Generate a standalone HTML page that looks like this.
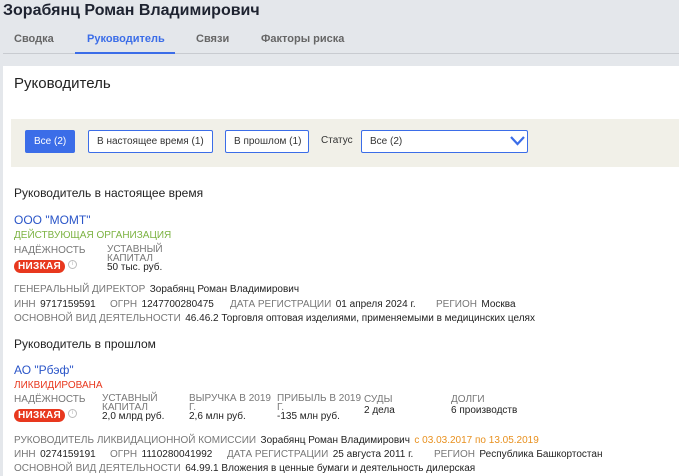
<!DOCTYPE html><html><head><meta charset="utf-8"><style>
*{margin:0;padding:0;box-sizing:border-box}
body{width:679px;height:476px;overflow:hidden;background:#e4e7eb;font-family:"Liberation Sans",sans-serif;position:relative;color:#222}
.a{position:absolute;white-space:nowrap}
.l{color:#777;font-size:10px}
.v{color:#222;font-size:10px}
.badge{background:#e8381e;color:#fff;font-weight:bold;font-size:10px;border-radius:7px;padding:1px 4px;letter-spacing:.3px}
.i{display:inline-block;width:9px;height:9px;border:1px solid #bbb;border-radius:50%;font-size:6px;color:#bbb;text-align:center;line-height:7px;vertical-align:middle;margin-left:3px}
.btn{position:absolute;top:130px;height:23px;border:1px solid #3b6de8;border-radius:2px;background:#fff;font-size:10px;line-height:21px;padding-left:8px;color:#333}
.t{position:absolute;top:33px;font-size:11px;font-weight:bold;color:#666;white-space:nowrap}
</style></head><body>
<div class="a" style="left:3px;top:2px;font-size:16px;font-weight:bold;color:#1e2330">Зорабянц Роман Владимирович</div>
<div class="t" style="left:14px">Сводка</div>
<div class="t" style="left:87px;color:#3b6de8">Руководитель</div>
<div class="t" style="left:196px">Связи</div>
<div class="t" style="left:261px">Факторы риска</div>
<div class="a" style="left:3px;top:53px;width:676px;height:1px;background:#c8cbd0"></div>
<div class="a" style="left:75px;top:52px;width:100px;height:2px;background:#3b6de8"></div>
<div class="a" style="left:3px;top:66px;width:676px;height:410px;background:#fff"></div>
<div class="a" style="left:14px;top:75px;font-size:15px;color:#222">Руководитель</div>
<div class="a" style="left:11px;top:119px;width:668px;height:48px;background:#f1f0e8"></div>
<div class="btn" style="left:25px;width:50px;background:#3b6de8;color:#fff">Все (2)</div>
<div class="btn" style="left:88px;width:125px">В настоящее время (1)</div>
<div class="btn" style="left:225px;width:84px">В прошлом (1)</div>
<div class="a" style="left:321px;top:135px;font-size:10px;color:#333">Статус</div>
<div class="btn" style="left:361px;width:167px">Все (2)</div>
<svg class="a" style="left:510px;top:136px" width="15" height="10"><path d="M1 1L7.5 8L14 1" stroke="#3b6de8" stroke-width="2.2" fill="none"/></svg>
<div class="a" style="left:14px;top:186px;font-size:12px;color:#222">Руководитель в настоящее время</div>
<div class="a" style="left:14px;top:213px;font-size:12px;color:#2a55c8">ООО "МОМТ"</div>
<div class="a" style="left:14px;top:230px;font-size:10px;color:#7cb342">ДЕЙСТВУЮЩАЯ ОРГАНИЗАЦИЯ</div>
<div class="a l" style="left:14px;top:245px">НАДЁЖНОСТЬ</div>
<div class="a l" style="left:107px;top:245px;line-height:9px">УСТАВНЫЙ<br>КАПИТАЛ</div>
<div class="a" style="left:14px;top:256px"><span class="badge">НИЗКАЯ</span><span class="i">i</span></div>
<div class="a v" style="left:107px;top:262px">50 тыс. руб.</div>
<div class="a" style="left:14px;top:279px"><span class="l">ГЕНЕРАЛЬНЫЙ ДИРЕКТОР</span> <span class="v">Зорабянц Роман Владимирович</span></div>
<div class="a" style="left:14px;top:294px"><span class="l">ИНН</span> <span class="v">9717159591</span></div>
<div class="a" style="left:110px;top:294px"><span class="l">ОГРН</span> <span class="v">1247700280475</span></div>
<div class="a" style="left:230px;top:294px"><span class="l">ДАТА РЕГИСТРАЦИИ</span> <span class="v">01 апреля 2024 г.</span></div>
<div class="a" style="left:436px;top:294px"><span class="l">РЕГИОН</span> <span class="v">Москва</span></div>
<div class="a" style="left:14px;top:308px"><span class="l">ОСНОВНОЙ ВИД ДЕЯТЕЛЬНОСТИ</span> <span class="v">46.46.2 Торговля оптовая изделиями, применяемыми в медицинских целях</span></div>
<div class="a" style="left:14px;top:337px;font-size:12px;color:#222">Руководитель в прошлом</div>
<div class="a" style="left:14px;top:363px;font-size:12px;color:#2a55c8">АО "Рбэф"</div>
<div class="a" style="left:14px;top:380px;font-size:10px;color:#e8381e">ЛИКВИДИРОВАНА</div>
<div class="a l" style="left:14px;top:394px">НАДЁЖНОСТЬ</div>
<div class="a l" style="left:102px;top:394px;line-height:9px">УСТАВНЫЙ<br>КАПИТАЛ</div>
<div class="a l" style="left:189px;top:394px;line-height:9px">ВЫРУЧКА В 2019<br>Г.</div>
<div class="a l" style="left:277px;top:394px;line-height:9px">ПРИБЫЛЬ В 2019<br>Г.</div>
<div class="a l" style="left:364px;top:394px">СУДЫ</div>
<div class="a l" style="left:451px;top:394px">ДОЛГИ</div>
<div class="a" style="left:14px;top:405px"><span class="badge">НИЗКАЯ</span><span class="i">i</span></div>
<div class="a v" style="left:102px;top:411px">2,0 млрд руб.</div>
<div class="a v" style="left:189px;top:411px">2,6 млн руб.</div>
<div class="a v" style="left:277px;top:411px">-135 млн руб.</div>
<div class="a v" style="left:364px;top:405px">2 дела</div>
<div class="a v" style="left:451px;top:405px">6 производств</div>
<div class="a" style="left:14px;top:430px"><span class="l">РУКОВОДИТЕЛЬ ЛИКВИДАЦИОННОЙ КОМИССИИ</span> <span class="v">Зорабянц Роман Владимирович</span> <span style="font-size:10px;color:#e8901e">с 03.03.2017 по 13.05.2019</span></div>
<div class="a" style="left:14px;top:444px"><span class="l">ИНН</span> <span class="v">0274159191</span></div>
<div class="a" style="left:110px;top:444px"><span class="l">ОГРН</span> <span class="v">1110280041992</span></div>
<div class="a" style="left:227px;top:444px"><span class="l">ДАТА РЕГИСТРАЦИИ</span> <span class="v">25 августа 2011 г.</span></div>
<div class="a" style="left:434px;top:444px"><span class="l">РЕГИОН</span> <span class="v">Республика Башкортостан</span></div>
<div class="a" style="left:14px;top:458px"><span class="l">ОСНОВНОЙ ВИД ДЕЯТЕЛЬНОСТИ</span> <span class="v">64.99.1 Вложения в ценные бумаги и деятельность дилерская</span></div>
</body></html>
